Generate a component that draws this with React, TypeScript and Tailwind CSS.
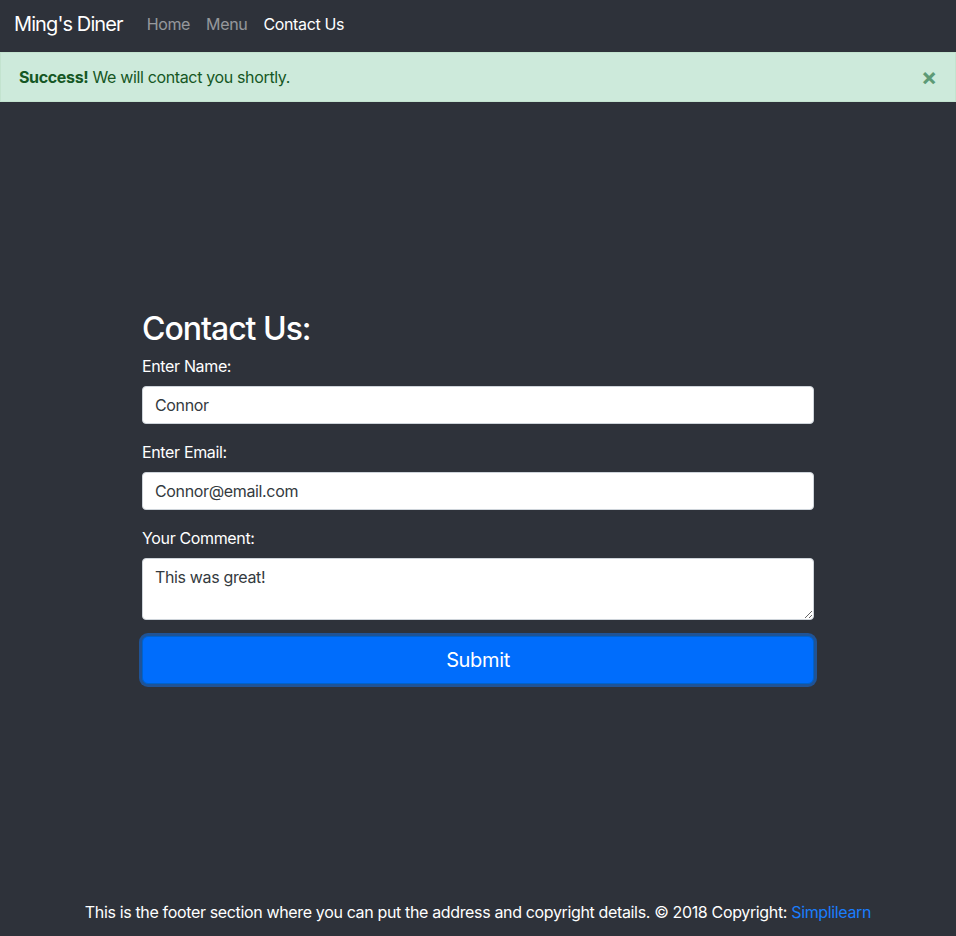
import React from "react";

export default function App() {
  const font = { fontFamily: 'Inter, "Noto Sans", "Liberation Sans", sans-serif' };
  return (
    <div className="flex h-[936px] flex-col bg-[#2e323a] tracking-[-0.022em] text-white" style={font}>
      <nav className="flex h-[52px] shrink-0 items-center pb-[4px] pl-[14px]">
        <a className="mr-[16px] text-[20px] leading-[30px] tracking-[-0.045em] text-white">Ming's Diner</a>
        <a className="px-[8px] text-[16px] leading-[24px] text-white/50">Home</a>
        <a className="px-[8px] text-[16px] leading-[24px] text-white/50">Menu</a>
        <a className="px-[8px] text-[16px] leading-[24px] text-white">Contact Us</a>
      </nav>
      <div className="flex h-[50px] shrink-0 items-center justify-between border border-[#c3e3cf] bg-[#cdeadb] pl-[18px] pr-[18px] text-[16px] text-[#155724]">
        <div>
          <strong className="font-bold">Success!</strong> We will contact you shortly.
        </div>
        <span className="text-[24px] font-bold leading-none text-[#5d9a76]">×</span>
      </div>
      <main className="flex flex-1 items-center justify-center pb-[8px]">
        <form className="w-[672px]" onSubmit={(e) => e.preventDefault()}>
          <h2 className="mb-[6px] text-[32px] font-medium leading-[38px] tracking-[-0.032em]">Contact Us:</h2>
          <label className="mb-[8px] block text-[16px] leading-[24px]">Enter Name:</label>
          <input
            readOnly
            defaultValue="Connor"
            className="mb-[16px] block h-[38px] w-full rounded-[4px] border border-[#ced4da] bg-white px-[12px] text-[16px] text-[#343a40] outline-none"
          />
          <label className="mb-[8px] block text-[16px] leading-[24px]">Enter Email:</label>
          <input
            readOnly
            defaultValue="Connor@email.com"
            className="mb-[16px] block h-[38px] w-full rounded-[4px] border border-[#ced4da] bg-white px-[12px] text-[16px] text-[#343a40] outline-none"
          />
          <label className="mb-[8px] block text-[16px] leading-[24px]">Your Comment:</label>
          <textarea
            readOnly
            defaultValue="This was great!"
            className="mb-[16px] block h-[62px] w-full rounded-[4px] border border-[#ced4da] bg-white px-[12px] py-[6px] text-[16px] leading-[24px] text-[#343a40] outline-none"
          />
          <button
            type="submit"
            className="block h-[48px] w-full rounded-[6px] border border-[#0062cc] bg-[#006dfc] text-[20px] leading-[30px] text-white shadow-[0_0_0_3px_#1f5396]"
          >
            Submit
          </button>
        </form>
      </main>
      <footer className="flex h-[36px] shrink-0 items-start justify-center text-[16px] leading-[24px]">
        <p>
          This is the footer section where you can put the address and copyright details. © 2018 Copyright:{" "}
          <a className="text-[#1a7dfd]">Simplilearn</a>
        </p>
      </footer>
    </div>
  );
}
